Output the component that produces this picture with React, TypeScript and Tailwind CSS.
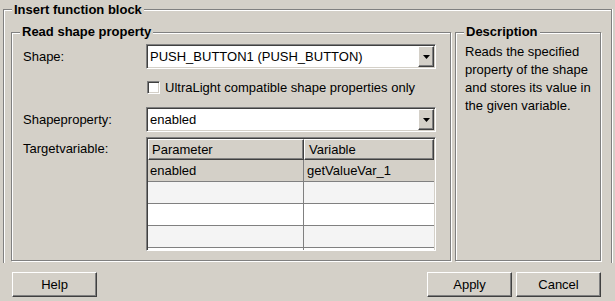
import React from "react";

const sunken =
  "border border-t-[#808080] border-l-[#808080] border-b-white border-r-white shadow-[inset_1px_1px_0_#404040,inset_-1px_-1px_0_#d4d0c8]";
const raised =
  "border border-t-white border-l-white border-b-[#404040] border-r-[#404040] shadow-[inset_-1px_-1px_0_#808080]";

function Combo({ value }: { value: string }) {
  return (
    <div className={`flex h-[25px] w-[290px] bg-white ${sunken} p-px`}>
      <div className="flex flex-1 items-center pl-[2px] leading-[15px]">{value}</div>
      <div className={`flex w-[16px] items-center justify-center bg-[#d4d0c8] ${raised}`}>
        <svg width="7" height="4" viewBox="0 0 7 4">
          <polygon points="0,0 7,0 3.5,4" fill="#000" />
        </svg>
      </div>
    </div>
  );
}

function Button({ label }: { label: string }) {
  return (
    <button className={`flex h-[25px] w-[85px] items-center justify-center bg-[#d4d0c8] ${raised}`}>
      {label}
    </button>
  );
}

const ROWS = [
  { param: "enabled", variable: "getValueVar_1", bg: "bg-[#d4d0c8]" },
  { param: "", variable: "", bg: "bg-[#f4f4f4]" },
  { param: "", variable: "", bg: "bg-white" },
  { param: "", variable: "", bg: "bg-[#f4f4f4]" },
  { param: "", variable: "", bg: "bg-white" },
];

export default function App() {
  return (
    <div className="h-[301px] w-[615px] overflow-hidden bg-[#d4d0c8] pt-[9px] font-['Liberation_Sans',Arial,sans-serif] text-[13px] text-black">
      {/* Insert function block */}
      <div className="relative ml-[3px] h-[254px] w-[609px] border border-b-0 border-[#808080] pl-[7px] pt-[22px] shadow-[inset_1px_1px_0_#fff,1px_0_0_#fff]">
        <span className="absolute left-[8px] top-[-8px] bg-[#d4d0c8] px-[2px] font-bold leading-[15px]">
          Insert function block
        </span>
        <div className="flex gap-[4px]">
          {/* Read shape property */}
          <div className="relative h-[229px] w-[440px] border border-[#808080] pl-[11px] pt-[11px] shadow-[inset_1px_1px_0_#fff,1px_1px_0_#fff]">
            <span className="absolute left-[8px] top-[-9px] bg-[#d4d0c8] px-[2px] font-bold leading-[15px]">
              Read shape property
            </span>
            <div className="flex h-[25px] items-center">
              <div className="w-[123px] leading-[15px]">Shape:</div>
              <Combo value="PUSH_BUTTON1 (PUSH_BUTTON)" />
            </div>
            <div className="ml-[124px] mt-[12px] flex h-[13px] items-center gap-[5px]">
              <div className={`h-[13px] w-[13px] bg-white ${sunken}`} />
              <span className="leading-[15px]">UltraLight compatible shape properties only</span>
            </div>
            <div className="mt-[13px] flex h-[25px] items-center">
              <div className="w-[123px] leading-[15px]">Shapeproperty:</div>
              <Combo value="enabled" />
            </div>
            <div className="mt-[5px] flex items-start">
              <div className="w-[123px] pt-[4px] leading-[15px]">Targetvariable:</div>
              <div className={`h-[114px] w-[290px] overflow-hidden bg-white ${sunken} p-px`}>
                <div className="flex h-[21px]">
                  <div className={`flex w-[156px] items-center bg-[#d4d0c8] pl-[3px] leading-[15px] ${raised}`}>
                    Parameter
                  </div>
                  <div className={`flex flex-1 items-center bg-[#d4d0c8] pl-[4px] leading-[15px] ${raised}`}>
                    Variable
                  </div>
                </div>
                {ROWS.map((r, i) => (
                  <div key={i} className={`flex h-[22px] border-b border-[#808080] ${r.bg}`}>
                    <div className="flex w-[156px] items-center border-r border-[#808080] pl-[2px] leading-[15px]">
                      {r.param}
                    </div>
                    <div className="flex flex-1 items-center pl-[3px] leading-[15px]">{r.variable}</div>
                  </div>
                ))}
              </div>
            </div>
          </div>

          {/* Description */}
          <div className="relative h-[229px] w-[146px] border border-[#808080] pl-[9px] pt-[10px] shadow-[inset_1px_1px_0_#fff,1px_1px_0_#fff]">
            <span className="absolute left-[8px] top-[-9px] bg-[#d4d0c8] px-[2px] font-bold leading-[15px]">
              Description
            </span>
            <p className="leading-[18px]">
              Reads the specified property of the shape and stores its value in the given variable.
            </p>
          </div>
        </div>
      </div>

      <div className="mt-[9px] flex items-center justify-between pl-[12px] pr-[14px]">
        <Button label="Help" />
        <div className="flex gap-[4px]">
          <Button label="Apply" />
          <Button label="Cancel" />
        </div>
      </div>
    </div>
  );
}
